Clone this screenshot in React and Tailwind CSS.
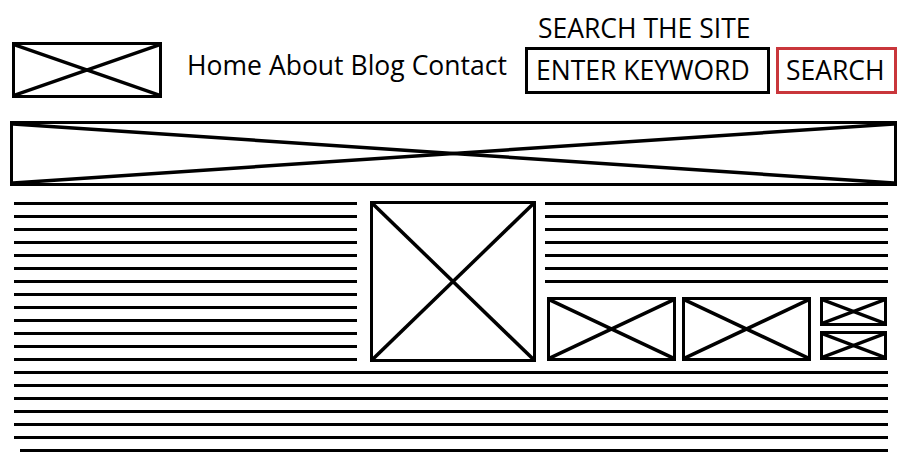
import React from "react";

const XBox = ({ className = "" }) => (
  <div className={`border-[3px] border-black bg-white ${className}`}>
    <svg className="block w-full h-full" viewBox="0 0 100 100" preserveAspectRatio="none">
      <line x1="0" y1="0" x2="100" y2="100" stroke="black" strokeWidth="3.5" vectorEffect="non-scaling-stroke" />
      <line x1="100" y1="0" x2="0" y2="100" stroke="black" strokeWidth="3.5" vectorEffect="non-scaling-stroke" />
    </svg>
  </div>
);

const Lines = ({ count, className = "" }) => (
  <div className={`flex flex-col gap-[10px] ${className}`}>
    {Array.from({ length: count }).map((_, i) => (
      <div key={i} className="h-[3px] bg-black" />
    ))}
  </div>
);

export default function App() {
  return (
    <div className="w-[908px] h-[466px] bg-white overflow-hidden text-black" style={{ fontFamily: '"Open Sans", sans-serif' }}>
      <header className="flex items-start h-[121px] pr-[11px]">
        <XBox className="ml-[12px] mt-[42px] w-[150px] h-[56px]" />
        <nav className="ml-[25px] mt-[52px] text-[26.5px] leading-none flex gap-[7px]">
          <a>Home</a>
          <a>About</a>
          <a>Blog</a>
          <a>Contact</a>
        </nav>
        <div className="ml-auto flex flex-col">
          <div className="pl-[13px] mt-[15px] text-[26.5px] leading-none">SEARCH THE SITE</div>
          <div className="mt-[5px] flex gap-[6px]">
            <div className="w-[245px] h-[47px] border-[3px] border-black pl-[8px] flex items-center text-[26.5px] leading-none">
              ENTER KEYWORD
            </div>
            <button className="w-[121px] h-[47px] border-[3px] border-[#c9363b] pl-[7px] flex items-center text-[26.5px] leading-none">
              SEARCH
            </button>
          </div>
        </div>
      </header>

      <XBox className="ml-[10px] w-[887px] h-[65px]" />

      <main className="mt-[15px] pl-[14px]">
        <div className="flex items-start h-[161px]">
          <Lines count={13} className="w-[343px] mt-[1px]" />
          <XBox className="ml-[13px] w-[166px] h-[161px]" />
          <div className="ml-[9px] w-[343px] flex flex-col">
            <Lines count={7} className="mt-[1px]" />
            <div className="mt-[14px] ml-[2px] flex items-start">
              <XBox className="w-[129px] h-[64px]" />
              <XBox className="ml-[6px] w-[129px] h-[64px]" />
              <div className="ml-[9px] flex flex-col gap-[5px]">
                <XBox className="w-[67px] h-[29px]" />
                <XBox className="w-[67px] h-[29px]" />
              </div>
            </div>
          </div>
        </div>
        <div className="mt-[9px] w-[874px] flex flex-col gap-[10px]">
          <Lines count={6} />
          <div className="ml-[6px] h-[3px] bg-black" />
        </div>
      </main>
    </div>
  );
}
